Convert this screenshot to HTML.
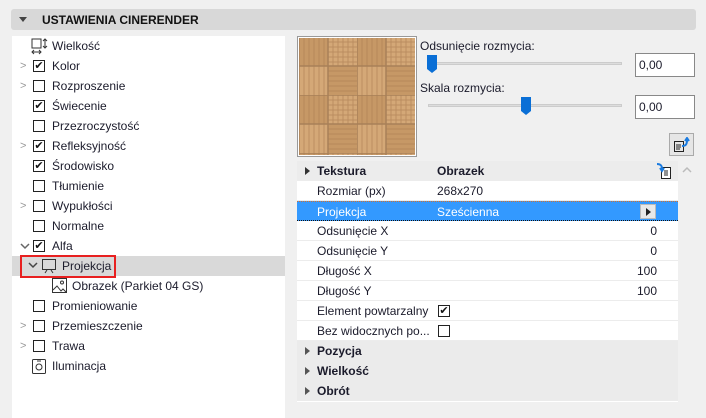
<!DOCTYPE html>
<html><head><meta charset="utf-8"><style>
*{margin:0;padding:0;box-sizing:border-box}
body{width:706px;height:418px;background:#f0f0f0;font-family:"Liberation Sans",sans-serif;font-size:12px;color:#1b1b2b;position:relative;overflow:hidden}
.a{position:absolute}
.hdr{left:11px;top:9px;width:685px;height:21px;background:#d8d8d8;border-radius:3px}
.hdr span{position:absolute;left:31px;top:4px;font-weight:bold;font-size:12px;color:#111}
.left{left:12px;top:36px;width:273px;height:382px;background:#fff}
.row{position:absolute;left:0;width:273px;height:20px}
.row .t{position:absolute;left:40px;top:3px}
.cb{position:absolute;left:21px;top:4px;width:12px;height:12px;border:1px solid #222;background:#fff;font-size:11px;line-height:10px;text-align:center;color:#111}
.chev{position:absolute;left:8px;top:4px;color:#999;font-size:11px}
.tbl{left:297px;top:161px;width:381px;height:241px;background:#fff}
.tr{position:absolute;left:0;width:381px;height:20px;border-bottom:1px solid #ececec}
.tr .l{position:absolute;left:20px;top:3px}
.tr .v{position:absolute;left:140px;top:3px}
.tr .n{position:absolute;right:21px;top:3px}
.g{background:#ebebeb;font-weight:bold;border-bottom:none}
.inp{width:60px;height:24px;border:1px solid #888;background:#fff;padding:4px 3px;font-size:12px}
.trk{height:3px;background:#ddd;border:1px solid #ccc;width:194px}
</style></head><body>
<div class="a hdr"><svg class="a" style="left:8px;top:8px" width="8" height="5"><path d="M0 0H8L4 5Z" fill="#444"/></svg><span>USTAWIENIA CINERENDER</span></div>
<div class="a left">
<div class="row" style="top:0"><svg class="a" style="left:19px;top:2px" width="18" height="18"><rect x="1" y="1" width="9" height="9" fill="none" stroke="#333"/><path d="M14 1v9M12 3l2-2 2 2M12 8l2 2 2-2M1 14h9M3 12l-2 2 2 2M8 12l2 2-2 2" stroke="#333" fill="none"/></svg><span class="t">Wielkość</span></div>
<div class="row" style="top:20px"><span class="chev">&gt;</span><div class="cb">✔</div><span class="t">Kolor</span></div>
<div class="row" style="top:40px"><span class="chev">&gt;</span><div class="cb"></div><span class="t">Rozproszenie</span></div>
<div class="row" style="top:60px"><div class="cb">✔</div><span class="t">Świecenie</span></div>
<div class="row" style="top:80px"><div class="cb"></div><span class="t">Przezroczystość</span></div>
<div class="row" style="top:100px"><span class="chev">&gt;</span><div class="cb">✔</div><span class="t">Refleksyjność</span></div>
<div class="row" style="top:120px"><div class="cb">✔</div><span class="t">Środowisko</span></div>
<div class="row" style="top:140px"><div class="cb"></div><span class="t">Tłumienie</span></div>
<div class="row" style="top:160px"><span class="chev">&gt;</span><div class="cb"></div><span class="t">Wypukłości</span></div>
<div class="row" style="top:180px"><div class="cb"></div><span class="t">Normalne</span></div>
<div class="row" style="top:200px"><svg class="a" style="left:8px;top:7px" width="10" height="8"><path d="M1 1l4 4 4-4" stroke="#666" stroke-width="1.5" fill="none"/></svg><div class="cb">✔</div><span class="t">Alfa</span></div>
<div class="row" style="top:220px;height:20px;background:#d9d9d9"></div>
<div class="a" style="left:8px;top:219px;width:96px;height:23px;border:2px solid #e82020"></div>
<svg class="a" style="left:16px;top:226px" width="10" height="8"><path d="M1 1l4 4 4-4" stroke="#444" stroke-width="1.5" fill="none"/></svg>
<svg class="a" style="left:29px;top:222px" width="16" height="16"><rect x="1.5" y="1.5" width="13" height="10" fill="none" stroke="#333"/><path d="M4 15l2-3M12 15l-2-3" stroke="#333"/></svg>
<span class="a" style="left:50px;top:223px;font-size:12px">Projekcja</span>
<svg class="a" style="left:40px;top:242px" width="15" height="15"><rect x="0.5" y="0.5" width="14" height="14" fill="#fff" stroke="#333"/><circle cx="10" cy="4.5" r="1.5" fill="none" stroke="#333"/><path d="M1 12l4-4 4 5 2-2 3 3" stroke="#333" fill="none"/></svg>
<span class="a" style="left:60px;top:243px">Obrazek (Parkiet 04 GS)</span>
<div class="row" style="top:260px"><div class="cb"></div><span class="t">Promieniowanie</span></div>
<div class="row" style="top:280px"><span class="chev">&gt;</span><div class="cb"></div><span class="t">Przemieszczenie</span></div>
<div class="row" style="top:300px"><span class="chev">&gt;</span><div class="cb"></div><span class="t">Trawa</span></div>
<div class="row" style="top:320px"><svg class="a" style="left:20px;top:2px" width="14" height="16"><rect x="0.5" y="1.5" width="13" height="14" rx="1" fill="none" stroke="#333"/><circle cx="7" cy="9" r="3" fill="none" stroke="#333"/><path d="M5 3h4" stroke="#333"/></svg><span class="t">Iluminacja</span></div>
</div>
<svg class="a" style="left:297px;top:36px" width="120" height="121">
<defs><pattern id="p" width="58" height="58" patternUnits="userSpaceOnUse" x="2" y="1">
<rect width="58" height="58" fill="#d4a877"/>
<g fill="#c69866"><rect x="0" y="0" width="29" height="29"/><rect x="29" y="29" width="29" height="29"/></g>
<g stroke="#a97c50" stroke-width="1" opacity=".6"><path d="M5 0v29M10 0v29M15 0v29M20 0v29M25 0v29M29 34h29M29 39h29M29 44h29M29 49h29M29 54h29M29 5h29M29 10h29M29 15h29M29 20h29M29 25h29M5 29v29M10 29v29M15 29v29M20 29v29M25 29v29M34 0v29M39 0v29M44 0v29M49 0v29M54 0v29" transform="translate(0,0)"/></g>
<g stroke="#a88058" stroke-width="1.5"><path d="M0 0h58M0 29h58M0 0v58M29 0v58"/></g>
</pattern></defs>
<rect x="0.5" y="0.5" width="119" height="120" fill="#fff" stroke="#999"/>
<rect x="2" y="2" width="116" height="117" fill="url(#p)"/>
</svg>
<span class="a" style="left:420px;top:39px">Odsunięcie rozmycia:</span>
<div class="a trk" style="left:428px;top:62px"></div>
<svg class="a" style="left:427px;top:55px" width="10" height="19"><path d="M0 0h10v14l-5 4-5-4z" fill="#0a6fd6"/></svg>
<div class="a inp" style="left:635px;top:53px">0,00</div>
<span class="a" style="left:420px;top:81px">Skala rozmycia:</span>
<div class="a trk" style="left:428px;top:104px"></div>
<svg class="a" style="left:521px;top:97px" width="10" height="19"><path d="M0 0h10v14l-5 4-5-4z" fill="#0a6fd6"/></svg>
<div class="a inp" style="left:635px;top:95px">0,00</div>
<div class="a" style="left:669px;top:133px;width:25px;height:23px;border:1px solid #aaa;background:#e6e6e6"></div>
<svg class="a" style="left:673px;top:137px" width="18" height="16"><rect x="1.5" y="4.5" width="9" height="10" fill="none" stroke="#222"/><path d="M3 8h5M3 10h5M3 12h4" stroke="#222"/><path d="M9 9c4 0 5-2 5-6M12 4l2-3 2 3" stroke="#1a7be0" stroke-width="2" fill="none"/></svg>
<div class="a tbl">
<div class="tr g" style="top:0;background:#ececec"><svg class="a" style="left:8px;top:6px" width="5" height="8"><path d="M0 0l5 4-5 4z" fill="#333"/></svg><span class="l">Tekstura</span><span class="v">Obrazek</span>
<svg class="a" style="left:359px;top:2px" width="16" height="16"><rect x="5.5" y="4.5" width="9" height="11" fill="#fff" stroke="#222"/><path d="M8 8h4M8 10h4M8 12h4" stroke="#222"/><path d="M1 1c3 0 5 1 5 5M4 5l2 3 2-3" stroke="#1a7be0" stroke-width="2" fill="none"/></svg></div>
<div class="tr" style="top:20px"><span class="l">Rozmiar (px)</span><span class="v">268x270</span></div>
<div class="tr" style="top:40px;background:#3399ff;color:#fff;border-top:1px dotted #d07030;border-bottom:1px dotted #111"><span class="l">Projekcja</span><span class="v">Sześcienna</span><div class="a" style="left:343px;top:2px;width:16px;height:15px;background:#e8e8e8;border:1px solid #bbb"></div><svg class="a" style="left:349px;top:6px" width="5" height="8"><path d="M0 0l5 4-5 4z" fill="#222"/></svg></div>
<div class="tr" style="top:60px"><span class="l">Odsunięcie X</span><span class="n">0</span></div>
<div class="tr" style="top:80px"><span class="l">Odsunięcie Y</span><span class="n">0</span></div>
<div class="tr" style="top:100px"><span class="l">Długość X</span><span class="n">100</span></div>
<div class="tr" style="top:120px"><span class="l">Długość Y</span><span class="n">100</span></div>
<div class="tr" style="top:140px"><span class="l">Element powtarzalny</span><div class="cb" style="left:141px;top:4px">✔</div></div>
<div class="tr" style="top:160px"><span class="l">Bez widocznych po...</span><div class="cb" style="left:141px;top:4px"></div></div>
<div class="tr g" style="top:180px"><svg class="a" style="left:8px;top:6px" width="5" height="8"><path d="M0 0l5 4-5 4z" fill="#555"/></svg><span class="l">Pozycja</span></div>
<div class="tr g" style="top:200px"><svg class="a" style="left:8px;top:6px" width="5" height="8"><path d="M0 0l5 4-5 4z" fill="#555"/></svg><span class="l">Wielkość</span></div>
<div class="tr g" style="top:220px"><svg class="a" style="left:8px;top:6px" width="5" height="8"><path d="M0 0l5 4-5 4z" fill="#555"/></svg><span class="l">Obrót</span></div>
</div>
<svg class="a" style="left:682px;top:166px" width="10" height="7"><path d="M1 6l4-4 4 4" stroke="#bbb" stroke-width="1.5" fill="none"/></svg>
</body></html>
